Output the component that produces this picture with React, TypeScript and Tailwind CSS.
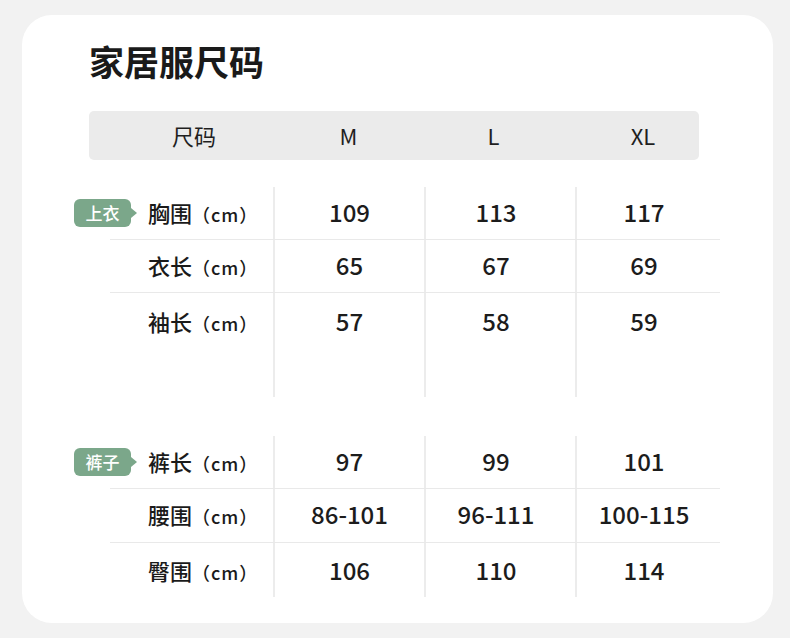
const font = { fontFamily: '"Noto Sans CJK SC", "Noto Sans", sans-serif' }

interface Row {
  label: string
  values: [string, string, string]
  height: string
  pad?: string
  tail?: string
}

const tops: Row[] = [
  { label: "胸围", values: ["109", "113", "117"], height: "h-[52px]" },
  { label: "衣长", values: ["65", "67", "69"], height: "h-[52px]" },
  { label: "袖长", values: ["57", "58", "59"], height: "h-[59px]", tail: "h-[45px]" },
]

const pants: Row[] = [
  { label: "裤长", values: ["97", "99", "101"], height: "h-[52px]" },
  { label: "腰围", values: ["86-101", "96-111", "100-115"], height: "h-[53px]" },
  { label: "臀围", values: ["106", "110", "114"], height: "h-[54px]", pad: "pt-[3px]" },
]

function Tag({ text }: { text: string }) {
  return (
    <div className="absolute left-[-36px] top-[12px] flex items-center">
      <div className="w-[57px] h-[28px] rounded-[6px] bg-[#7ba78a] text-white text-[17px] font-medium flex items-center justify-center">
        {text}
      </div>
      <div className="w-0 h-0 border-y-[5px] border-y-transparent border-l-[6px] border-l-[#7ba78a]" />
    </div>
  )
}

function Section({ rows, tag }: { rows: Row[]; tag: string }) {
  return (
    <div className="relative w-[610px]">
      <Tag text={tag} />
      {rows.map((row, i) => (
        <div
          key={row.label}
          className={`grid grid-cols-[163px_151px_151px_145px] ${i > 0 ? "border-t border-[#e9e9e9]" : ""}`}
        >
          <div className="flex flex-col">
            <div className={`${row.height} ${row.pad ?? ""} pb-[2px] flex items-center pl-[38px] text-[#1a1a1a]`}>
              <span className="whitespace-nowrap">
                <span className="text-[22px] font-medium">{row.label}</span>
                <span className="text-[18px] font-medium tracking-[1px]">（cm）</span>
              </span>
            </div>
            {row.tail && <div className={row.tail} />}
          </div>
          {row.values.map((v, j) => (
            <div key={j} className="border-l-2 border-[#ececec] flex flex-col">
              <div
                className={`${row.height} ${row.pad ?? ""} pb-[3px] flex items-center justify-center text-[24px] font-medium text-[#1c1c1c] ${j > 0 ? "pr-[9px]" : ""}`}
              >
                {v}
              </div>
              {row.tail && <div className={row.tail} />}
            </div>
          ))}
        </div>
      ))}
    </div>
  )
}

export default function App() {
  return (
    <div className="w-[790px] h-[638px] bg-[#f2f2f2] pt-[15px] pl-[22px]" style={font}>
      <div className="w-[751px] h-[608px] bg-white rounded-[30px] pl-[67px] pt-[25px]">
        <h1 className="text-[35px] font-bold leading-none text-[#1a1a1a] h-[40px] flex items-center">家居服尺码</h1>

        <div className="mt-[31px] w-[610px] h-[49px] bg-[#ebebeb] rounded-[5px] grid grid-cols-[184px_151px_151px_124px] items-center text-[22px] text-[#1f1f1f]">
          <div className="text-center pl-[26px]">尺码</div>
          <div className="text-center">M</div>
          <div className="text-center pr-[12px]">L</div>
          <div className="text-center pl-[12px]">XL</div>
        </div>

        <div className="mt-[27px] ml-[21px]">
          <Section rows={tops} tag="上衣" />
        </div>
        <div className="mt-[39px] ml-[21px]">
          <Section rows={pants} tag="裤子" />
        </div>
      </div>
    </div>
  )
}
